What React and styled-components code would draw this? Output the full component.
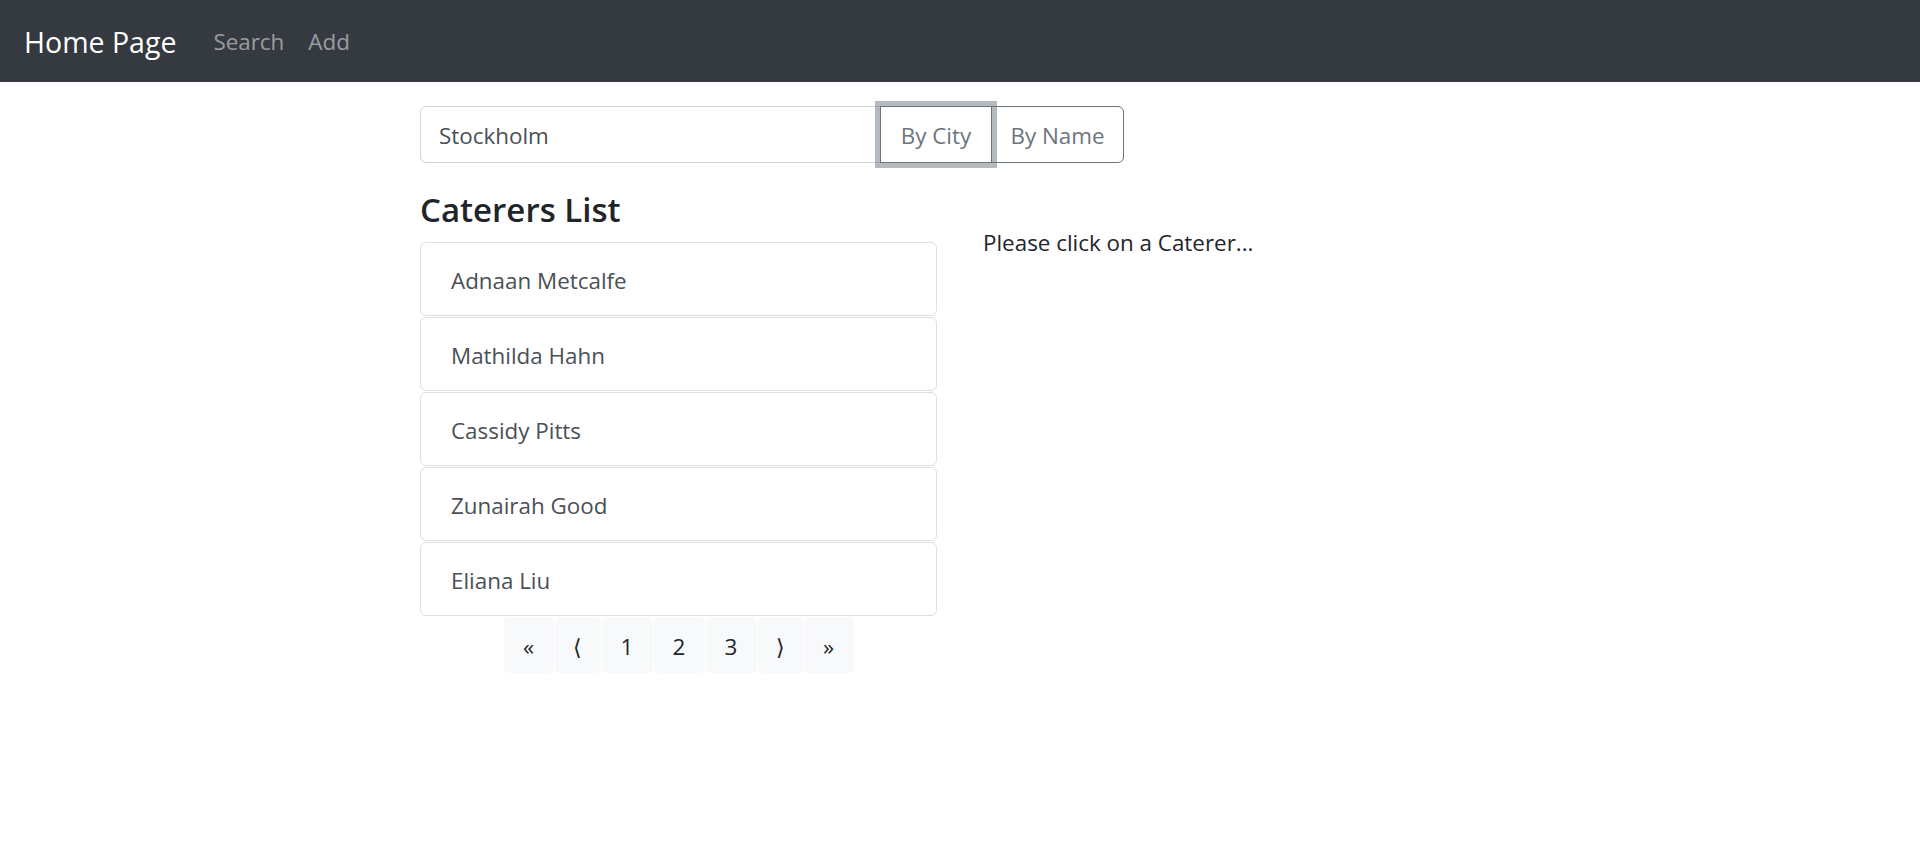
import React from "react";
import styled, { createGlobalStyle } from "styled-components";

const GlobalStyle = createGlobalStyle`
  html, body {
    margin: 0;
    padding: 0;
    background: #fff;
    font-family: "Open Sans", "Noto Sans", sans-serif;
    color: #212529;
  }
  * { box-sizing: border-box; }
`;

const NavBar = styled.nav`
  height: 82px;
  background: #343a40;
  display: flex;
  align-items: center;
  padding: 2px 24px 0;
`;

const Brand = styled.a`
  color: #fff;
  font-size: 28.5px;
  line-height: 45px;
  margin-right: 37px;
  text-decoration: none;
  cursor: pointer;
`;

const NavLink = styled.a`
  color: rgba(255, 255, 255, 0.5);
  font-size: 22.4px;
  line-height: 36px;
  margin-right: 24px;
  text-decoration: none;
  cursor: pointer;
`;

const Container = styled.main`
  width: 1080px;
  margin: 0 auto;
  padding-top: 24px;
`;

const SearchGroup = styled.form`
  display: flex;
  height: 57px;
  margin-bottom: 25px;
`;

const SearchInput = styled.input`
  width: 461px;
  height: 57px;
  border: 1.5px solid #ced4da;
  border-radius: 6px 0 0 6px;
  padding: 2px 18px 0;
  font-family: inherit;
  font-size: 22.4px;
  color: #495057;
  outline: none;
`;

const ToggleButton = styled.button`
  height: 57px;
  width: ${(p) => p.$w}px;
  margin-left: -1px;
  background: #fff;
  border: 1.5px solid #6c757d;
  border-radius: ${(p) => (p.$last ? "0 6px 6px 0" : "0")};
  color: #6c757d;
  font-family: inherit;
  font-size: 22.4px;
  padding: 2px 0 0;
  position: relative;
  box-shadow: ${(p) => (p.$focus ? "0 0 0 5px rgba(108, 117, 125, 0.5)" : "none")};
  z-index: ${(p) => (p.$focus ? 1 : 0)};
  cursor: pointer;
`;

const Row = styled.div`
  display: grid;
  grid-template-columns: 517px 1fr;
  column-gap: 46px;
`;

const Heading = styled.h4`
  margin: 0 0 11px;
  font-size: 33px;
  line-height: 43px;
  font-weight: 600;
  color: #212529;
`;

const List = styled.div`
  display: flex;
  flex-direction: column;
  gap: 1px;
`;

const ListItem = styled.button`
  height: 74px;
  width: 100%;
  text-align: left;
  padding: 3px 30px 0;
  background: #fff;
  border: 1.5px solid #dfdfdf;
  border-radius: 6px;
  color: #495057;
  font-family: inherit;
  font-size: 22.4px;
  cursor: pointer;
`;

const Pager = styled.ul`
  list-style: none;
  margin: 1px 0 0;
  padding: 0;
  display: flex;
  justify-content: center;
  gap: 1px;
`;

const PageItem = styled.li`
  width: ${(p) => p.$w}px;
  height: 56px;
  display: flex;
  align-items: center;
  justify-content: center;
  padding-top: 2px;
  background: #f8f9fa;
  border-radius: 5px;
  color: #212529;
  font-size: 22.4px;
  cursor: pointer;
`;

const Detail = styled.p`
  margin: 37px 0 0;
  font-size: 22.4px;
  line-height: 36px;
  color: #212529;
`;

const caterers = ["Adnaan Metcalfe", "Mathilda Hahn", "Cassidy Pitts", "Zunairah Good", "Eliana Liu"];

const pages = [
  { label: "«", w: 50 },
  { label: "⟨", w: 46 },
  { label: "1", w: 51 },
  { label: "2", w: 51 },
  { label: "3", w: 51 },
  { label: "⟩", w: 45 },
  { label: "»", w: 50 },
];

export default function App() {
  return (
    <>
      <GlobalStyle />
      <NavBar>
        <Brand>Home Page</Brand>
        <NavLink>Search</NavLink>
        <NavLink>Add</NavLink>
      </NavBar>
      <Container>
        <SearchGroup onSubmit={(e) => e.preventDefault()}>
          <SearchInput defaultValue="Stockholm" />
          <ToggleButton type="button" $w={112} $focus>By City</ToggleButton>
          <ToggleButton type="button" $w={133} $last>By Name</ToggleButton>
        </SearchGroup>
        <Row>
          <div>
            <Heading>Caterers List</Heading>
            <List>
              {caterers.map((name) => (
                <ListItem key={name}>{name}</ListItem>
              ))}
            </List>
            <Pager>
              {pages.map((pg) => (
                <PageItem key={pg.label} $w={pg.w}>{pg.label}</PageItem>
              ))}
            </Pager>
          </div>
          <div>
            <Detail>Please click on a Caterer...</Detail>
          </div>
        </Row>
      </Container>
    </>
  );
}
